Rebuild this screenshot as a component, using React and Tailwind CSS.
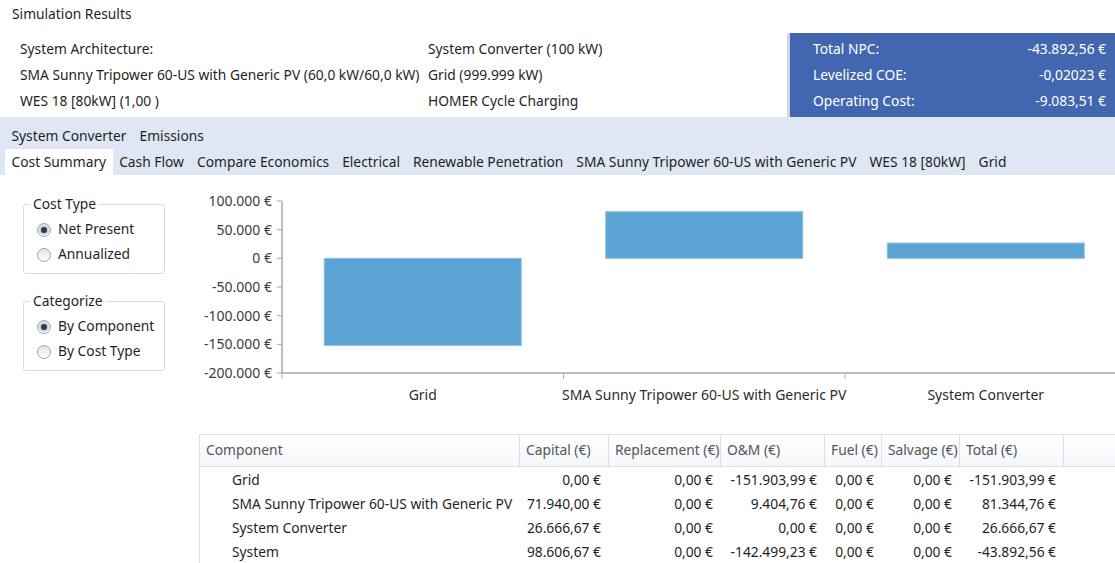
import React from "react";

const font = { fontFamily: '"Noto Sans", "Liberation Sans", sans-serif' };

const archLeft = [
  "System Architecture:",
  "SMA Sunny Tripower 60-US with Generic PV (60,0 kW/60,0 kW)",
  "WES 18 [80kW] (1,00 )",
];
const archRight = ["System Converter (100 kW)", "Grid (999.999 kW)", "HOMER Cycle Charging"];

const totals = [
  ["Total NPC:", "-43.892,56 €"],
  ["Levelized COE:", "-0,02023 €"],
  ["Operating Cost:", "-9.083,51 €"],
];

const tabsTop = ["System Converter", "Emissions"];
const tabsBottom = [
  "Cost Summary",
  "Cash Flow",
  "Compare Economics",
  "Electrical",
  "Renewable Penetration",
  "SMA Sunny Tripower 60-US with Generic PV",
  "WES 18 [80kW]",
  "Grid",
];

const costs = [
  { name: "Grid", total: -151903.99 },
  { name: "SMA Sunny Tripower 60-US with Generic PV", total: 81344.76 },
  { name: "System Converter", total: 26666.67 },
];

const rows = [
  ["Grid", "0,00 €", "0,00 €", "-151.903,99 €", "0,00 €", "0,00 €", "-151.903,99 €"],
  ["SMA Sunny Tripower 60-US with Generic PV", "71.940,00 €", "0,00 €", "9.404,76 €", "0,00 €", "0,00 €", "81.344,76 €"],
  ["System Converter", "26.666,67 €", "0,00 €", "0,00 €", "0,00 €", "0,00 €", "26.666,67 €"],
  ["System", "98.606,67 €", "0,00 €", "-142.499,23 €", "0,00 €", "0,00 €", "-43.892,56 €"],
];

const headers = ["Component", "Capital (€)", "Replacement (€)", "O&M (€)", "Fuel (€)", "Salvage (€)", "Total (€)"];

const Radio = ({ checked, label }) => (
  <label className="flex items-center h-[25px] gap-[7px] pl-[13px]">
    <span className="w-[14px] h-[14px] rounded-full border border-[#9aa4b1] bg-gradient-to-b from-[#dfe3e9] to-[#ffffff] flex items-center justify-center">
      {checked && <span className="w-[6px] h-[6px] rounded-full bg-[#2f3a4a] ring-2 ring-[#c9d3e0]" />}
    </span>
    <span>{label}</span>
  </label>
);

const GroupBox = ({ title, options }) => (
  <fieldset className="w-[142px] border border-[#d7dce3] rounded-[3px] pb-[6px]">
    <legend className="ml-[6px] px-[3px] leading-[18px]">{title}</legend>
    <div className="pt-[4px]">
      {options.map((o) => (
        <Radio key={o.label} checked={o.checked} label={o.label} />
      ))}
    </div>
  </fieldset>
);

// bar chart of net present cost per component
const CostChart = () => {
  const top = 26;
  const bottom = 198;
  const left = 92;
  const catW = 281.5;
  const scale = (bottom - top) / 300000;
  const y = (v) => top + (100000 - v) * scale;
  const ticks = [100000, 50000, 0, -50000, -100000, -150000, -200000];
  const fmt = (v) => (v === 0 ? "0 €" : `${v < 0 ? "-" : ""}${Math.abs(v).toLocaleString("de-DE")} €`);

  return (
    <svg width="925" height="235" className="block">
      <line x1={left} y1={top} x2={left} y2={bottom} stroke="#a9a9a9" strokeWidth="1.5" />
      <line x1={left} y1={bottom} x2="925" y2={bottom} stroke="#a9a9a9" strokeWidth="1.5" />
      {ticks.map((t) => (
        <g key={t}>
          <line x1={left - 5} y1={y(t)} x2={left} y2={y(t)} stroke="#a9a9a9" />
          <text x={left - 10} y={y(t) + 5} textAnchor="end" fontSize="14" fill="#3c3c3c">
            {fmt(t)}
          </text>
        </g>
      ))}
      {[0, 1, 2, 3].map((i) => (
        <line key={i} x1={left + i * catW} y1={bottom} x2={left + i * catW} y2={bottom + 6} stroke="#a9a9a9" />
      ))}
      {costs.map((c, i) => {
        const cx = left + catW * (i + 0.5);
        const y0 = y(0);
        const y1 = y(c.total);
        return (
          <g key={c.name}>
            <rect
              x={cx - 98.5}
              y={Math.min(y0, y1)}
              width="197"
              height={Math.abs(y1 - y0)}
              fill="#5ba3d3"
              stroke="#8cc0e4"
              strokeWidth="1"
            />
            <text x={cx} y={225} textAnchor="middle" fontSize="14" fill="#2b2b2b">
              {c.name}
            </text>
          </g>
        );
      })}
    </svg>
  );
};

const cols = "grid grid-cols-[320px_89px_112px_104px_57px_78px_104px_1fr]";

const CostTable = () => (
  <div className="ml-[9px] mt-[24px]">
    <div className={`${cols} h-[33px] border-t border-b border-l border-[#d9e0ea] bg-gradient-to-b from-[#ffffff] to-[#f4f7fb] text-[#555]`}>
      {headers.map((h) => (
        <div key={h} className="flex items-center pl-[6px] border-r border-[#d9e0ea] whitespace-nowrap overflow-hidden">
          {h}
        </div>
      ))}
      <div />
    </div>
    <div className="border-l border-[#d9e0ea] pt-[1px]">
      {rows.map((r) => (
        <div key={r[0]} className={`${cols} h-[24px] items-center`}>
          <div className="pl-[32px] whitespace-nowrap">{r[0]}</div>
          {r.slice(1).map((v, i) => (
            <div key={i} className="text-right pr-[8px] whitespace-nowrap">
              {v}
            </div>
          ))}
          <div />
        </div>
      ))}
    </div>
  </div>
);

export default function App() {
  return (
    <div style={font} className="w-[1115px] h-[563px] overflow-hidden bg-white text-[13.8px] text-[#1f1f1f]">
      <div className="h-[28px] flex items-center pl-[12px]">Simulation Results</div>

      <div className="flex h-[89px]">
        <div className="flex pt-[8px] pl-[20px]">
          <div className="w-[408px]">
            {archLeft.map((t) => (
              <div key={t} className="h-[26px] flex items-center whitespace-nowrap">
                {t}
              </div>
            ))}
          </div>
          <div className="w-[359px]">
            {archRight.map((t) => (
              <div key={t} className="h-[26px] flex items-center whitespace-nowrap">
                {t}
              </div>
            ))}
          </div>
        </div>
        <div className="mt-[5px] flex-1 bg-[#4267b0] border-l-[3px] border-[#cfd6e0] pt-[3px] text-white">
          {totals.map(([k, v]) => (
            <div key={k} className="h-[26px] flex items-center justify-between pl-[23px] pr-[9px]">
              <span>{k}</span>
              <span>{v}</span>
            </div>
          ))}
        </div>
      </div>

      <div className="bg-[#dee7f3] h-[58px] pt-[7px]">
        <div className="flex h-[25px] items-center pl-[5px]">
          {tabsTop.map((t) => (
            <div key={t} className="px-[6.5px]">
              {t}
            </div>
          ))}
        </div>
        <div className="flex h-[26px] items-stretch pl-[5px]">
          {tabsBottom.map((t, i) => (
            <div key={t} className={`px-[6.5px] flex items-center whitespace-nowrap ${i === 0 ? "bg-white" : ""}`}>
              {t}
            </div>
          ))}
        </div>
      </div>

      <div className="flex">
        <div className="w-[190px] pl-[23px] pt-[20px] flex flex-col gap-[18px]">
          <GroupBox
            title="Cost Type"
            options={[
              { label: "Net Present", checked: true },
              { label: "Annualized", checked: false },
            ]}
          />
          <GroupBox
            title="Categorize"
            options={[
              { label: "By Component", checked: true },
              { label: "By Cost Type", checked: false },
            ]}
          />
        </div>
        <div className="flex-1">
          <CostChart />
          <CostTable />
        </div>
      </div>
    </div>
  );
}
